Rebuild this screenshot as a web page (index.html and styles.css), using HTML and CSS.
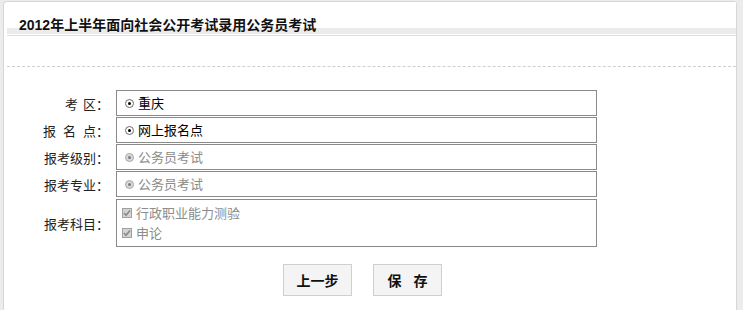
FILE: index.html
```html
<!DOCTYPE html>
<html lang="zh">
<head>
<meta charset="utf-8">
<link rel="stylesheet" href="styles.css">
</head>
<body>
<div class="page">
  <div class="title-bar"><h1 class="title">2012年上半年面向社会公开考试录用公务员考试</h1></div>
  <div class="dash"></div>
  <div class="form">
    <div class="row">
      <div class="label">考<span class="sp"></span>区：</div>
      <div class="field"><span class="radio on"></span><span class="val">重庆</span></div>
    </div>
    <div class="row">
      <div class="label">报<span class="sp wide"></span>名<span class="sp wide"></span>点：</div>
      <div class="field"><span class="radio on"></span><span class="val">网上报名点</span></div>
    </div>
    <div class="row">
      <div class="label">报考级别：</div>
      <div class="field"><span class="radio dis"></span><span class="val dim">公务员考试</span></div>
    </div>
    <div class="row">
      <div class="label">报考专业：</div>
      <div class="field"><span class="radio dis"></span><span class="val dim">公务员考试</span></div>
    </div>
    <div class="row tall">
      <div class="label">报考科目：</div>
      <div class="field multi">
        <div class="opt"><span class="check"><svg width="8" height="8" viewBox="0 0 8 8"><path d="M1 4 L3 6.3 L7 1.5" fill="none" stroke="#8a8a8a" stroke-width="1.6"/></svg></span><span class="val dim">行政职业能力测验</span></div>
        <div class="opt"><span class="check"><svg width="8" height="8" viewBox="0 0 8 8"><path d="M1 4 L3 6.3 L7 1.5" fill="none" stroke="#8a8a8a" stroke-width="1.6"/></svg></span><span class="val dim">申论</span></div>
      </div>
    </div>
    <div class="buttons">
      <button class="btn">上一步</button>
      <button class="btn">保<span class="bsp"></span>存</button>
    </div>
  </div>
</div>
</body>
</html>
```
FILE: styles.css
```css
html, body {
  margin: 0;
  padding: 0;
}
body {
  background: #ececec;
  width: 743px;
  height: 310px;
  overflow: hidden;
  font-family: "Noto Sans CJK SC", sans-serif;
}
.page {
  margin: 1px 6px 0 3px;
  height: 320px;
  background: #fff;
  border: 1px solid #d6d6d6;
  border-bottom: none;
  border-radius: 4px 4px 0 0;
  box-sizing: border-box;
}
.title-bar {
  margin: 0 0 0 3px;
  height: 35px;
  background: linear-gradient(to bottom, #fff 0, #fff 26px, #ebebeb 26px, #ebebeb 32px, #fff 32px, #fff 33px, #dedede 33px, #dedede 34px, #fff 34px);
}
.title {
  margin: 0;
  padding: 15px 0 0 12px;
  font-family: "Liberation Sans", "Noto Sans CJK SC", sans-serif;
  font-size: 14px;
  letter-spacing: 0;
  line-height: 17px;
  font-weight: bold;
  color: #111;
}
.dash {
  margin: 0 0 0 3px;
  height: 29px;
  border-bottom: 1px dashed #cfcfcf;
}
.form {
  padding-top: 23px;
}
.row {
  display: flex;
  align-items: center;
  margin-bottom: 1px;
}
.row.tall {
  margin-top: 2px;
}
.label {
  width: 112px;
  padding-right: 7px;
  box-sizing: border-box;
  text-align: right;
  font-size: 13px;
  color: #222;
}
.sp {
  display: inline-block;
  width: 5px;
}
.sp.wide {
  width: 7px;
}
.field {
  width: 481px;
  height: 26px;
  box-sizing: border-box;
  border: 1px solid #8a8a8a;
  display: flex;
  align-items: center;
  padding-left: 8px;
  font-size: 13px;
  color: #000;
}
.field.multi {
  height: 48px;
  flex-direction: column;
  align-items: flex-start;
  justify-content: center;
  padding-left: 5px;
}
.opt {
  display: flex;
  align-items: center;
  height: 20px;
}
.radio {
  width: 9px;
  height: 9px;
  border-radius: 50%;
  border: 1px solid #6c6c6c;
  box-sizing: border-box;
  position: relative;
  margin-right: 4px;
  background: #fff;
}
.radio::after {
  content: "";
  position: absolute;
  left: 2px;
  top: 2px;
  width: 3px;
  height: 3px;
  border-radius: 50%;
  background: #000;
}
.radio.dis {
  border-color: #a8a8a8;
  background: #d8d8d8;
}
.radio.dis::after {
  background: #7a7a7a;
}
.check {
  width: 10px;
  height: 10px;
  box-sizing: border-box;
  border: 1px solid #a0a0a0;
  background: #d4d4d4;
  margin-right: 4px;
  display: flex;
  align-items: center;
  justify-content: center;
}
.val {
  line-height: 18px;
}
.val.dim {
  color: #8c8c8c;
}
.buttons {
  display: flex;
  gap: 21px;
  padding: 16px 0 0 279px;
}
.btn {
  width: 69px;
  height: 32px;
  background: #f4f4f4;
  border: 1px solid #cfcfcf;
  font-family: "Noto Sans CJK SC", sans-serif;
  font-weight: bold;
  font-size: 14px;
  color: #111;
  padding: 0;
}
.bsp {
  display: inline-block;
  width: 12px;
}
```
